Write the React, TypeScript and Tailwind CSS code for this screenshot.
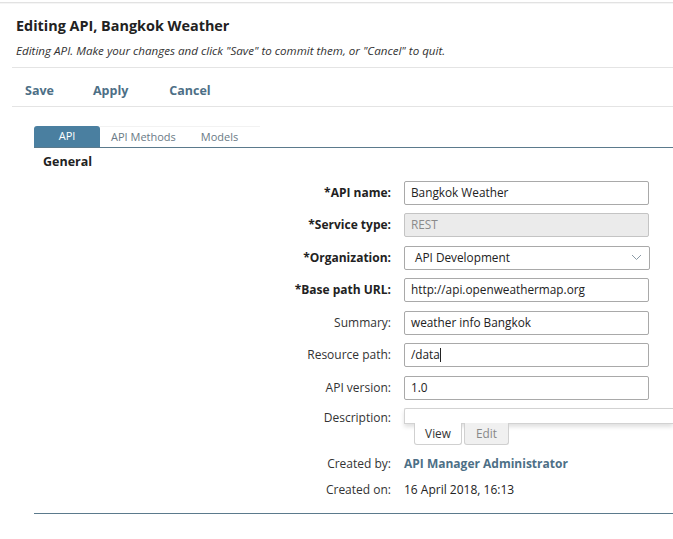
const font = { fontFamily: '"Open Sans", "Liberation Sans", sans-serif' };

const Row = ({
  label,
  required,
  children,
}: {
  label: string;
  required?: boolean;
  children: React.ReactNode;
}) => {
  return (
    <div className="flex items-center h-[24px] mb-[8.5px]">
      <div
        className={
          "w-[370px] pr-[13px] text-right text-[12px] " +
          (required ? "font-bold text-[#222]" : "text-[#333]")
        }
      >
        {required ? "*" : ""}
        {label}:
      </div>
      {children}
    </div>
  );
};

const Input = ({ value, disabled }: { value: string; disabled?: boolean }) => {
  return (
    <div
      className={
        "w-[245px] h-[24px] border border-[#a9a9a9] rounded-[2px] px-[6px] flex items-center text-[11.8px] " +
        (disabled ? "bg-[#ebebeb] text-[#8a8a8a] border-[#c4c4c4]" : "bg-white text-[#222]")
      }
    >
      {value}
    </div>
  );
};

export default function App() {
  return (
    <div className="w-[673px] h-[539px] bg-white overflow-hidden relative" style={font}>
      <div className="h-[2px]" />
      <div className="h-[1px] bg-[#e2e2e2]" />
      <div className="h-[1px] bg-[#f5f5f5]" />

      <div className="pl-[16px] pt-[12px]">
        <h1 className="text-[14.4px] font-bold text-[#222] leading-[20px]">
          Editing API, Bangkok Weather
        </h1>
        <p className="text-[11.6px] italic text-[#333] mt-[7px] leading-[16px]">
          Editing API. Make your changes and click "Save" to commit them, or "Cancel" to quit.
        </p>
      </div>

      <div className="ml-[12px] mt-[8px] border-t border-[#e4e4e4]" />
      <div className="ml-[12px] h-[38px] pt-[9px] flex items-center text-[12.5px] font-bold text-[#4d6f86]">
        <span className="ml-[13px]">Save</span>
        <span className="ml-[39px]">Apply</span>
        <span className="ml-[41px]">Cancel</span>
      </div>
      <div className="ml-[12px] border-t border-[#e4e4e4]" />

      <div className="ml-[34px] mt-[19px]">
        <div className="flex items-end h-[22px] border-b-[1.5px] border-[#5b7a8c]">
          <div className="w-[66px] h-[21px] bg-[#4a7fa0] text-white text-[11px] flex items-center justify-center rounded-t-[3px]">
            API
          </div>
          <div className="h-[21px] flex items-center text-[11px] text-[#6a7a86] border-t border-[#f2f2f2] pr-[22px]">
            <span className="ml-[11px]">API Methods</span>
            <span className="ml-[25px]">Models</span>
          </div>
        </div>
        <div className="ml-[9px] mt-[5px] text-[12.5px] font-bold text-[#222]">General</div>
      </div>

      <div className="mt-[9px] ml-[34px]">
        <Row label="API name" required>
          <Input value="Bangkok Weather" />
        </Row>
        <Row label="Service type" required>
          <Input value="REST" disabled />
        </Row>
        <Row label="Organization" required>
          <div className="w-[246px] h-[24px] border border-[#a9a9a9] rounded-[2px] pl-[10px] pr-[7px] flex items-center justify-between text-[11.8px] text-[#222]">
            <span>API Development</span>
            <svg width="11" height="7" viewBox="0 0 11 7" fill="none">
              <path d="M1 1l4.5 4.5L10 1" stroke="#8a9aa6" strokeWidth="1" />
            </svg>
          </div>
        </Row>
        <Row label="Base path URL" required>
          <Input value="http://api.openweathermap.org" />
        </Row>
        <Row label="Summary">
          <Input value="weather info Bangkok" />
        </Row>
        <Row label="Resource path">
          <div className="w-[245px] h-[24px] border border-[#a9a9a9] rounded-[2px] px-[6px] flex items-center text-[11.8px] text-[#222]">
            /data<span className="w-[1px] h-[14px] bg-[#222]" />
          </div>
        </Row>
        <Row label="API version">
          <Input value="1.0" />
        </Row>

        <div className="flex items-start">
          <div className="w-[370px] pr-[13px] text-right text-[12px] text-[#333] pt-[1px]">
            Description:
          </div>
          <div className="flex-1">
            <div className="h-[16px] border border-[#d2d2d2] border-r-0 rounded-tl-[2px] shadow-[0_3px_4px_rgba(0,0,0,0.12)]" />
            <div className="flex ml-[10px] -mt-[1px]">
              <div className="w-[48px] h-[22px] bg-white border border-[#d0d0d0] border-t-0 rounded-b-[3px] flex items-center justify-center text-[11.8px] text-[#333]">
                View
              </div>
              <div className="w-[45px] h-[22px] ml-[2px] bg-[#f0f0f0] border border-[#d0d0d0] border-t-0 rounded-b-[3px] flex items-center justify-center text-[11.8px] text-[#888]">
                Edit
              </div>
            </div>
          </div>
        </div>

        <div className="flex items-center h-[20px] mt-[9px] text-[12px]">
          <div className="w-[370px] pr-[13px] text-right text-[#333]">Created by:</div>
          <div className="font-bold text-[#4d6f86]">API Manager Administrator</div>
        </div>
        <div className="flex items-center h-[20px] mt-[6px] text-[12px]">
          <div className="w-[370px] pr-[13px] text-right text-[#333]">Created on:</div>
          <div className="text-[#222]">16 April 2018, 16:13</div>
        </div>

        <div className="mt-[13px] border-t-[1.5px] border-[#5b7a8c]" />
      </div>
    </div>
  );
}
